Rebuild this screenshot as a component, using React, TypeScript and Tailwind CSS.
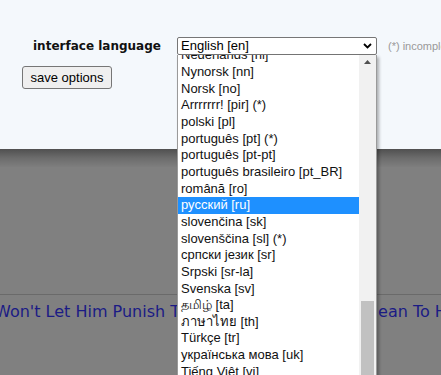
import React from 'react';

const options = [
  'Nederlands [nl]',
  'Nynorsk [nn]',
  'Norsk [no]',
  'Arrrrrrr! [pir] (*)',
  'polski [pl]',
  'português [pt] (*)',
  'português [pt-pt]',
  'português brasileiro [pt_BR]',
  'română [ro]',
  'русский [ru]',
  'slovenčina [sk]',
  'slovenščina [sl] (*)',
  'српски језик [sr]',
  'Srpski [sr-la]',
  'Svenska [sv]',
  'தமிழ் [ta]',
  'ภาษาไทย [th]',
  'Türkçe [tr]',
  'українська мова [uk]',
  'Tiếng Việt [vi]',
  '中文 [zh]',
];

const selected = 'русский [ru]';

export default function App() {
  return (
    <div className="relative w-[441px] h-[375px] overflow-hidden bg-[#808080] font-['Liberation_Sans',Arial,sans-serif]">
      {/* options panel */}
      <div className="h-[149px] bg-[#f4f8fc] pt-[37px]">
        <div className="flex items-center h-[18px]">
          <span className="shrink-0 ml-[33px] w-[126px] text-[12px] font-bold text-[#111] whitespace-nowrap font-['DejaVu_Sans',Verdana,sans-serif]">
            interface language
          </span>
          <div className="shrink-0 ml-[18px] w-[200px] h-[18px] flex items-center justify-between border border-[#767676] rounded-[2px] bg-white pl-[3px] pr-[4px] text-[13px] text-black">
            <span>English [en]</span>
            <svg width="9" height="6" viewBox="0 0 9 6">
              <path d="M1 1 L4.5 4.5 L8 1" fill="none" stroke="#000" strokeWidth="1.8" />
            </svg>
          </div>
          <span className="shrink-0 ml-[11px] text-[11px] text-[#999] whitespace-nowrap">(*) incomplete</span>
        </div>
        <button className="ml-[22px] mt-[11px] h-[23px] w-[90px] bg-[#efefef] border border-[#767676] rounded-[3px] text-[13px] text-black">
          save options
        </button>
      </div>

      {/* page below */}
      <div className="h-[18px] bg-gradient-to-b from-[#505050] via-[#6c6c6c] to-[#7e7e7e]" />
      <div className="h-[127px]" />
      <div className="h-px bg-[#6a6a6a]" />
      <div className="mt-[5px] -ml-[5px] whitespace-nowrap text-[16px] text-[#1b1b85] font-['DejaVu_Sans',Verdana,sans-serif]">
        Won't Let Him Punish Their Cousins For Being Mean To Him
      </div>

      {/* open dropdown */}
      <div className="absolute left-[177px] top-[55px] w-[200px] h-[330px] flex bg-white border-l border-r border-[#9a9a9a] shadow-[2px_2px_3px_rgba(0,0,0,0.3)]">
        <div className="flex-1 overflow-hidden">
          <div className="-mt-[7.7px]">
            {options.map(o => (
              <div
                key={o}
                className={
                  o === selected
                    ? 'h-[16.67px] leading-[16.67px] pl-[3px] text-[13px] whitespace-nowrap bg-[#1e90ff] text-white'
                    : 'h-[16.67px] leading-[16.67px] pl-[3px] text-[13px] whitespace-nowrap text-[#111]'
                }
              >
                {o}
              </div>
            ))}
          </div>
        </div>
        <div className="w-[17px] bg-[#f1f1f1] flex flex-col items-center">
          <div className="h-[17px] flex items-center justify-center">
            <svg width="7" height="4" viewBox="0 0 7 4">
              <path d="M0 4 L3.5 0 L7 4 Z" fill="#505050" />
            </svg>
          </div>
          <div className="mt-[232px] w-[13px] h-[100px] bg-[#c1c1c1]" />
        </div>
      </div>
    </div>
  );
}
